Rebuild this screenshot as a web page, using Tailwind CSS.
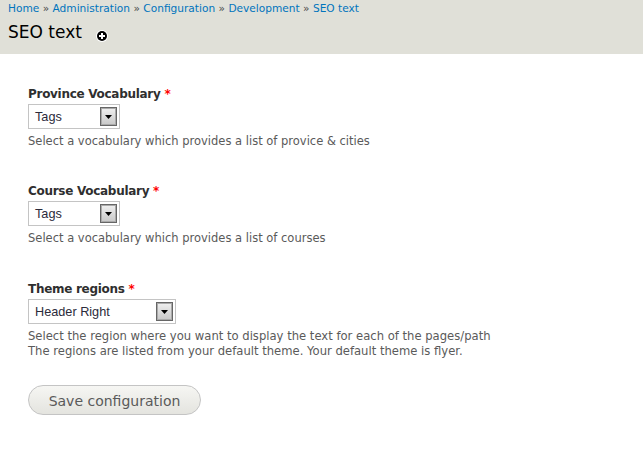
<!doctype html>
<html lang="en">
<head>
  <meta charset="utf-8" />
  <title>SEO text</title>
  <script src="https://cdn.jsdelivr.net/npm/@tailwindcss/browser@4"></script>
</head>
<body class="bg-white text-[#494949] font-['DejaVu_Sans',sans-serif] text-[11.6px] overflow-hidden">
  <header class="h-[54px] bg-[#e0e0d8] px-2">
    <nav class="h-[16px] leading-[16px] text-[#0074bd] text-[10.6px] whitespace-nowrap">
      <a href="#">Home</a> <span class="text-[#494949]">»</span>
      <a href="#">Administration</a> <span class="text-[#494949]">»</span>
      <a href="#">Configuration</a> <span class="text-[#494949]">»</span>
      <a href="#">Development</a> <span class="text-[#494949]">»</span>
      <a href="#">SEO text</a>
    </nav>
    <div class="flex items-center mt-[4px] h-[24px]">
      <h1 class="text-[17px] leading-[24px] text-black font-normal">SEO text</h1>
      <svg class="ml-[14px] mt-[8px]" width="12" height="12" viewBox="0 0 12 12">
        <circle cx="6" cy="6" r="6" fill="#fff"/>
        <circle cx="6" cy="6" r="5" fill="#000"/>
        <path d="M6 3v6M3 6h6" stroke="#fff" stroke-width="2"/>
      </svg>
    </div>
  </header>

  <main class="pl-7 pt-[32px]">
    <form>
      <div class="h-[97px]">
        <label class="block h-[16px] leading-[16px] font-bold text-[12px] tracking-[-0.29px] text-[#2f2f2f]">Province Vocabulary <span class="text-[#f00]">*</span></label>
        <div class="mt-[2px] w-[92px] h-[25px] border border-[#c4c4c4] bg-white flex items-center justify-between pl-[6px] pr-[2px] font-['Liberation_Sans',sans-serif] text-[12.7px] text-[#2b2b3b]">
          <span class="pt-[2px]">Tags</span>
          <span class="w-[17px] h-[19px] border border-[#666] shadow-[inset_0_0_0_1px_#aaa] bg-gradient-to-b from-[#f0f0f0] to-[#c8c8c8] flex items-center justify-center">
            <svg width="7" height="4" viewBox="0 0 7 4"><path d="M0 0h7L3.5 4z" fill="#000"/></svg>
          </span>
        </div>
        <p class="mt-[4px] leading-[16px] text-[11.5px] text-[#5a5a5a]">Select a vocabulary which provides a list of provice &amp; cities</p>
      </div>

      <div class="h-[98px]">
        <label class="block h-[16px] leading-[16px] font-bold text-[12px] tracking-[-0.29px] text-[#2f2f2f]">Course Vocabulary <span class="text-[#f00]">*</span></label>
        <div class="mt-[2px] w-[92px] h-[25px] border border-[#c4c4c4] bg-white flex items-center justify-between pl-[6px] pr-[2px] font-['Liberation_Sans',sans-serif] text-[12.7px] text-[#2b2b3b]">
          <span class="pt-[2px]">Tags</span>
          <span class="w-[17px] h-[19px] border border-[#666] shadow-[inset_0_0_0_1px_#aaa] bg-gradient-to-b from-[#f0f0f0] to-[#c8c8c8] flex items-center justify-center">
            <svg width="7" height="4" viewBox="0 0 7 4"><path d="M0 0h7L3.5 4z" fill="#000"/></svg>
          </span>
        </div>
        <p class="mt-[4px] leading-[16px] text-[11.5px] text-[#5a5a5a]">Select a vocabulary which provides a list of courses</p>
      </div>

      <div>
        <label class="block h-[16px] leading-[16px] font-bold text-[12px] tracking-[-0.29px] text-[#2f2f2f]">Theme regions <span class="text-[#f00]">*</span></label>
        <div class="mt-[2px] w-[148px] h-[25px] border border-[#c4c4c4] bg-white flex items-center justify-between pl-[6px] pr-[2px] font-['Liberation_Sans',sans-serif] text-[12.7px] text-[#2b2b3b]">
          <span class="pt-[2px]">Header Right</span>
          <span class="w-[17px] h-[19px] border border-[#666] shadow-[inset_0_0_0_1px_#aaa] bg-gradient-to-b from-[#f0f0f0] to-[#c8c8c8] flex items-center justify-center">
            <svg width="7" height="4" viewBox="0 0 7 4"><path d="M0 0h7L3.5 4z" fill="#000"/></svg>
          </span>
        </div>
        <p class="mt-[5px] leading-[15px] text-[#5a5a5a]">Select the region where you want to display the text for each of the pages/path<br>The regions are listed from your default theme. Your default theme is flyer.</p>
      </div>

      <button type="button" class="mt-[26px] pt-[2px] w-[173px] h-[30px] rounded-[15px] border border-[#c4c4c4] bg-gradient-to-b from-[#f6f6f3] to-[#e4e4df] text-[14px] text-[#5a5a5a] text-center">Save configuration</button>
    </form>
  </main>
</body>
</html>
